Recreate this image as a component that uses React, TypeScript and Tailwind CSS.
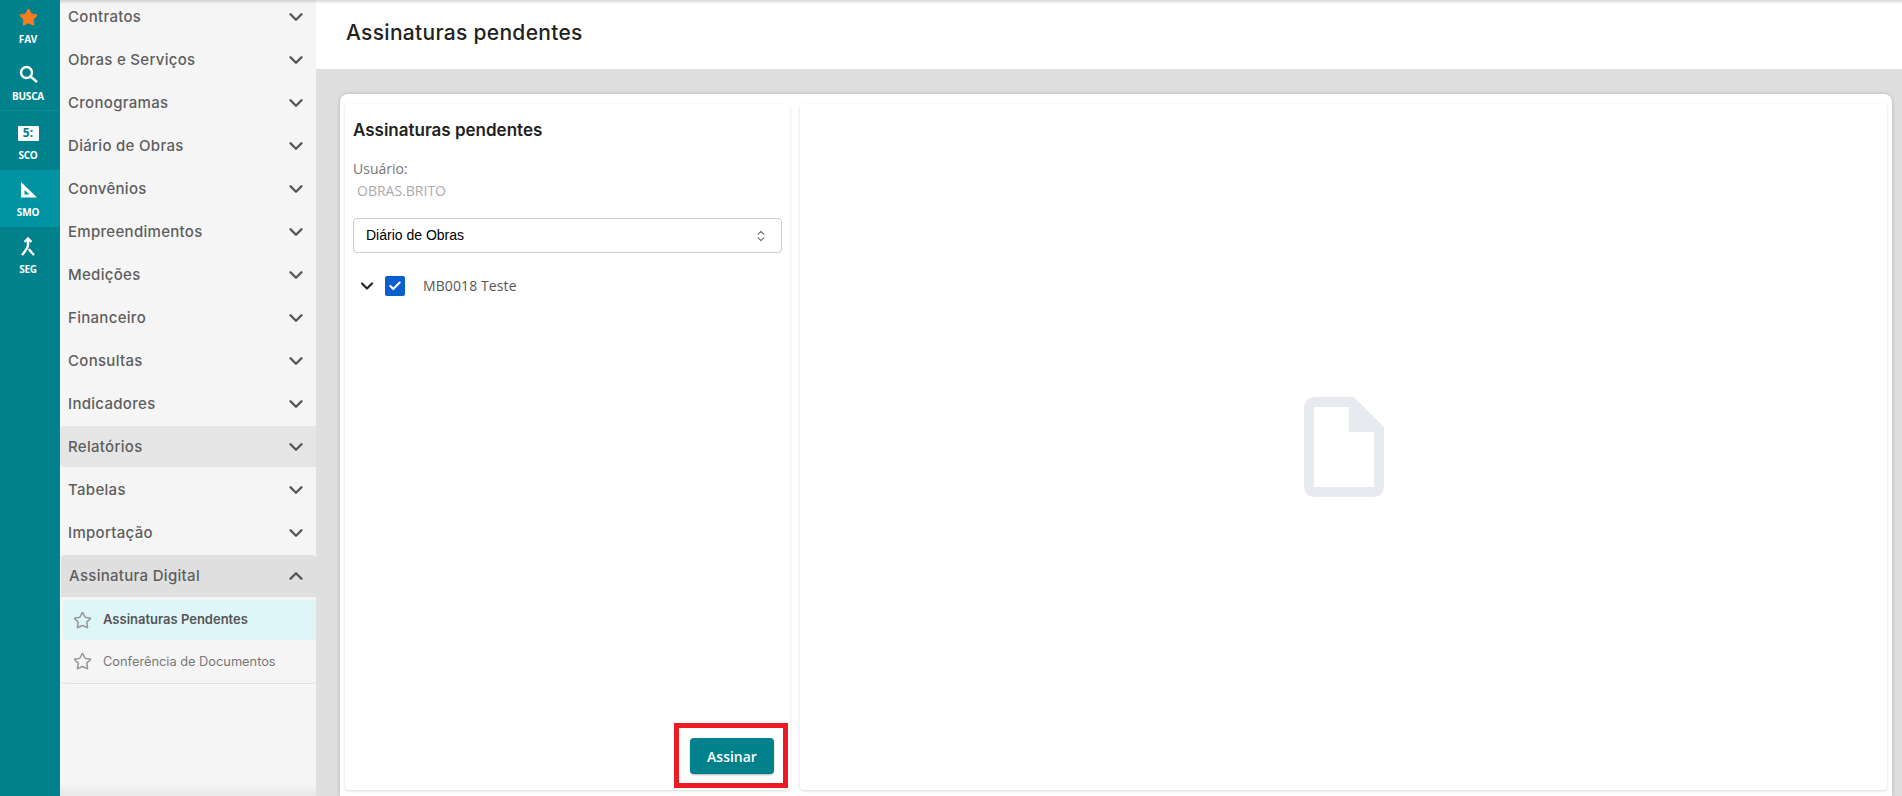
import { ChevronDown, ChevronUp, ChevronsUpDown, Check, Star } from "lucide-react";

const mont = "font-['Inter','Liberation_Sans',sans-serif]";

const menu = [
  "Contratos",
  "Obras e Serviços",
  "Cronogramas",
  "Diário de Obras",
  "Convênios",
  "Empreendimentos",
  "Medições",
  "Financeiro",
  "Consultas",
  "Indicadores",
  "Relatórios",
  "Tabelas",
  "Importação",
];

function RailItem({ label, icon, className }: { label: string; icon: React.ReactNode; className?: string }) {
  return (
    <div className={"flex shrink-0 flex-col items-center pt-[9px] pr-[4px] " + (className ?? "h-[57px]")}>
      <div className="flex h-[22px] items-center justify-center">{icon}</div>
      <span className="mt-[5px] font-['Open_Sans',sans-serif] text-[10px] leading-3 font-bold tracking-[-0.2px] text-white">
        {label}
      </span>
    </div>
  );
}

export default function App() {
  return (
    <div className="relative flex h-[796px] w-[1902px] overflow-hidden bg-[#dfdfdf]">
      {/* icon rail */}
      <div className="flex w-[60px] shrink-0 flex-col bg-[#00818c]">
        <RailItem label="FAV" className="-mt-[3px] h-[57px]" icon={<Star size={19} fill="#f57c20" stroke="#f57c20" />} />
        <RailItem
          label="BUSCA"
          className="h-[57px] border-b border-[#0a8f99]"
          icon={
            <svg width="19" height="18" viewBox="0 0 19 18" fill="none" stroke="white" strokeWidth="2.4">
              <circle cx="7.5" cy="7.5" r="5.5" />
              <path d="M11.5 11.5L18 17" />
            </svg>
          }
        />
        <RailItem
          label="SCO"
          className="h-[59px] pt-[11px]"
          icon={
            <div className="flex h-[15px] w-[21px] items-center justify-center rounded-[1px] bg-white font-['Open_Sans',sans-serif] text-[12px] leading-none font-bold text-[#00818c]">
              5:
            </div>
          }
        />
        <RailItem
          label="SMO"
          className="h-[57px] bg-[#0094a3]"
          icon={
            <svg width="17" height="16" viewBox="0 0 17 16">
              <path fill="white" fillRule="evenodd" d="M1 0l16 15.5H1zM4.5 8v4.5h5z" />
            </svg>
          }
        />
        <RailItem
          label="SEG"
          icon={
            <svg width="16" height="20" viewBox="0 0 16 20" fill="none" stroke="white" strokeWidth="2.4">
              <path d="M4.5 5L8 1.5 11.5 5M8 2v6c0 3-2 5-6 10M9 12c1 2 3 4 5 6" />
            </svg>
          }
        />
      </div>

      {/* menu */}
      <div className={"relative flex w-[256px] shrink-0 flex-col bg-[#f5f5f5] " + mont}>
        <div className="-mt-[5px] flex flex-col">
          {menu.map((m) => (
            <div
              key={m}
              className={
                "my-px flex h-[41px] shrink-0 items-center justify-between rounded-l-[4px] pr-[9px] pl-[8px] text-[15px] font-medium tracking-[0.3px] text-[#5e5e5e] " +
                (m === "Relatórios" ? "bg-[#e5e5e5]" : "")
              }
            >
              <span className="mt-[2px]">{m}</span>
              <ChevronDown size={22} strokeWidth={2.6} className="text-[#555]" />
            </div>
          ))}
        </div>
        <div className="mt-[1px] ml-[1px] rounded-b-[4px] border-b border-[#e0e0e0]">
          <div className="flex h-[42px] items-center justify-between rounded-t-[4px] bg-[#dfdfdf] pr-[9px] pl-[8px] text-[15px] font-medium tracking-[0.3px] text-[#5e5e5e]">
            Assinatura Digital
            <ChevronUp size={22} strokeWidth={2.6} className="text-[#555]" />
          </div>
          <div className="mt-[3px] ml-[2px] flex h-[40px] items-center gap-[11px] rounded-l-[4px] bg-[#dff6f9] pl-[10px] text-[13px] font-semibold text-[#555]">
            <Star size={19} strokeWidth={2} className="text-[#999]" />
            Assinaturas Pendentes
          </div>
          <div className="ml-[2px] flex h-[43px] items-center gap-[11px] pl-[10px] text-[12.8px] text-[#777]">
            <Star size={19} strokeWidth={2} className="text-[#999]" />
            Conferência de Documentos
          </div>
        </div>
        <div className="absolute right-0 bottom-0 left-0 h-[14px] bg-gradient-to-b from-transparent to-[#e8e8e8]" />
      </div>

      {/* main */}
      <div className="flex min-w-0 flex-1 flex-col">
        <div className={"flex h-[69px] shrink-0 items-center bg-white pb-[3px] pl-[30px] text-[21px] font-medium tracking-[0.3px] text-[#222] " + mont}>
          Assinaturas pendentes
        </div>
        <div className="flex-1 pt-[25px] pr-[10px] pl-[24px]">
          <div className="flex h-[702px] gap-[10px] rounded-t-[8px] bg-white px-[5px] pt-[10px] shadow-[0_0_4px_rgba(0,0,0,0.2)]">
            <div className="flex h-[686px] w-[445px] shrink-0 flex-col rounded-[4px] px-[8px] pt-[16px] shadow-[0_1px_3px_rgba(0,0,0,0.15)]">
              <div className={"text-[17px] leading-5 font-semibold text-[#222] " + mont}>Assinaturas pendentes</div>
              <div className="mt-[18px] font-['Open_Sans',sans-serif] text-[14px] leading-[22px] text-[#777]">Usuário:</div>
              <div className="pl-[4px] font-['Open_Sans',sans-serif] text-[14px] leading-[22px] text-[#aaa]">OBRAS.BRITO</div>
              <div className="mt-[16px] flex h-[35px] items-center justify-between rounded-[4px] border border-[#ccc] pr-[13px] pl-[12px] font-['Liberation_Sans',sans-serif] text-[14px] text-black">
                Diário de Obras
                <ChevronsUpDown size={14} className="text-[#777]" />
              </div>
              <div className="mt-[22px] flex items-center pl-[4px]">
                <ChevronDown size={20} strokeWidth={2.6} className="text-[#222]" />
                <div className="ml-[8px] flex h-5 w-5 items-center justify-center rounded-[2px] bg-[#0a5fcc]">
                  <Check size={14} strokeWidth={3.5} className="text-white" />
                </div>
                <span className="ml-[18px] font-['Open_Sans',sans-serif] text-[14px] tracking-[0.1px] text-[#555]">MB0018 Teste</span>
              </div>
              <div className="mt-auto -mr-[6px] mb-[2px] flex justify-end">
                <div className="border-[5px] border-[#ed1c24] pt-[10px] pr-[9px] pb-[9px] pl-[11px]">
                  <div className="flex h-[36px] w-[84px] items-center justify-center rounded-[4px] bg-[#00818c] font-['Open_Sans',sans-serif] text-[14px] font-semibold text-white shadow-[0_1px_2px_rgba(0,0,0,0.3)]">
                    Assinar
                  </div>
                </div>
              </div>
            </div>
            <div className="flex h-[686px] flex-1 items-center justify-center rounded-[4px] shadow-[0_1px_3px_rgba(0,0,0,0.15)]">
              <svg width="80" height="100" viewBox="0 0 80 100">
                <path
                  fill="#e7ebef"
                  fillRule="evenodd"
                  d="M10 0h40l30 30v60a10 10 0 0 1-10 10H10A10 10 0 0 1 0 90V10A10 10 0 0 1 10 0zM10 10v80h60V35H45V10z"
                />
              </svg>
            </div>
          </div>
        </div>
      </div>

      {/* shadow under the browser top edge */}
      <div className="absolute top-0 right-0 left-[60px] h-[4px] bg-gradient-to-b from-black/15 to-transparent" />
    </div>
  );
}
